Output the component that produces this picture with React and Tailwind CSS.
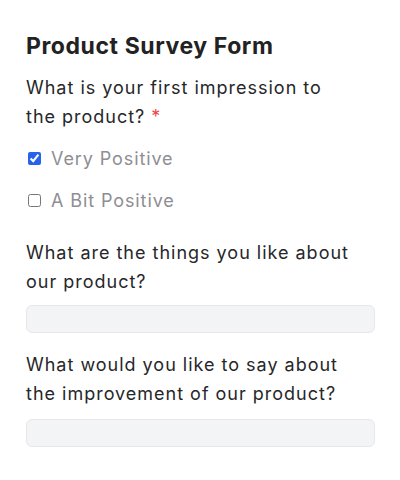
import React, { useState } from 'react';

const Question = ({ label, required, children }) => (
  <div className="flex flex-col">
    <label className="max-w-[326px] text-[18px] leading-[29px] tracking-[0.055em] text-[#27272a]">
      {label}
      {required && <span className="ml-[6px] text-[#ef4444]">*</span>}
    </label>
    {children}
  </div>
);

const Choice = ({ label, checked, onChange }) => (
  <label className="flex h-[28px] items-center gap-[10px] pl-[2px]">
    <input type="checkbox" checked={checked} onChange={onChange} className="m-0 h-[13px] w-[13px] accent-[#2563eb]" />
    <span className="text-[18px] tracking-[0.05em] text-[#8e8e93]">{label}</span>
  </label>
);

const App = () => {
  const [answers, setAnswers] = useState({ veryPositive: true, bitPositive: false });

  return (
    <div className="min-h-[480px] bg-white pl-[26px] pr-[25px] pt-[32px]" style={{ fontFamily: 'Inter, "Noto Sans", sans-serif' }}>
      <h1 className="text-[23px] font-bold leading-[28px] tracking-[0.025em] text-[#222222]">Product Survey Form</h1>

      <div className="mt-[13px]">
        <Question label="What is your first impression to the product?" required>
          <div className="mt-[13px] flex flex-col gap-[14px]">
            <Choice
              label="Very Positive"
              checked={answers.veryPositive}
              onChange={() => setAnswers({ ...answers, veryPositive: !answers.veryPositive })}
            />
            <Choice
              label="A Bit Positive"
              checked={answers.bitPositive}
              onChange={() => setAnswers({ ...answers, bitPositive: !answers.bitPositive })}
            />
          </div>
        </Question>
      </div>

      <div className="mt-[24px]">
        <Question label="What are the things you like about our product?">
          <input type="text" className="mt-[9px] h-[28px] w-full rounded-[6px] border border-[#e8e8ea] bg-[#f3f4f6] px-2 outline-none" />
        </Question>
      </div>

      <div className="mt-[17px]">
        <Question label="What would you like to say about the improvement of our product?">
          <input type="text" className="mt-[11px] h-[28px] w-full rounded-[6px] border border-[#e8e8ea] bg-[#f3f4f6] px-2 outline-none" />
        </Question>
      </div>
    </div>
  );
};

export default App;
